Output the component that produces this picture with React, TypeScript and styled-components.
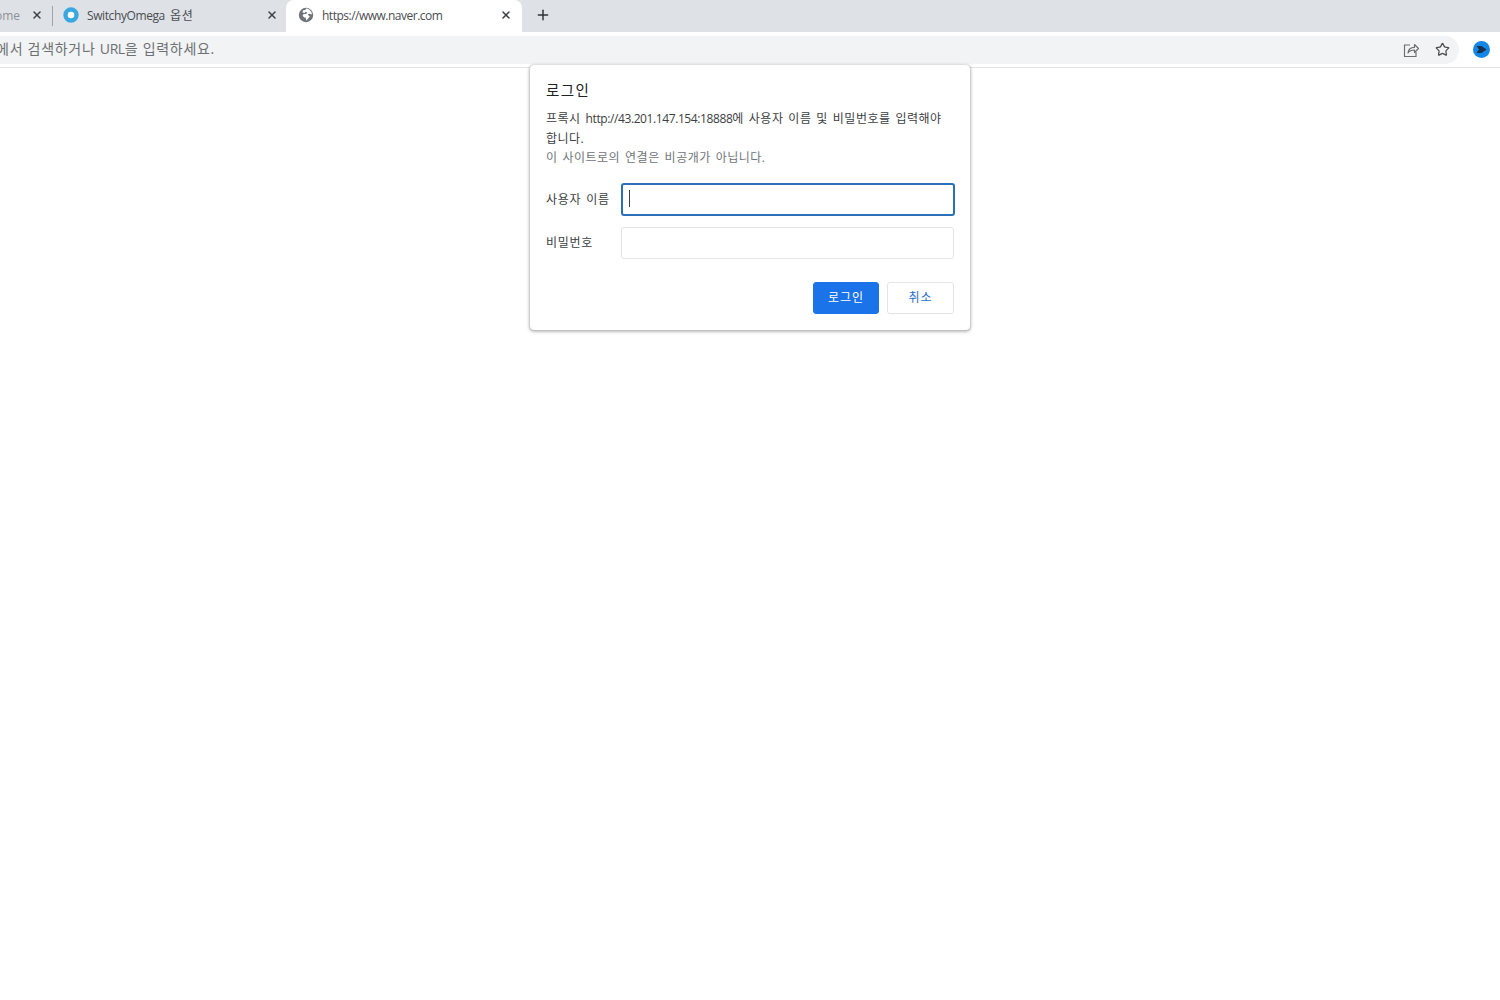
import React from "react";
import styled, { createGlobalStyle } from "styled-components";
import { Plus, Star, X } from "lucide-react";

const FONT = `"Open Sans", "Noto Sans CJK KR", sans-serif`;

const Global = createGlobalStyle`
  html, body { margin: 0; padding: 0; background: #fff; }
  body { font-family: ${FONT}; overflow: hidden; }
`;

const Page = styled.div`
  position: relative;
  width: 1500px;
  height: 1000px;
  overflow: hidden;
  background: #fff;
`;

const TabStrip = styled.div`
  display: flex;
  align-items: stretch;
  height: 32px;
  background: #dee1e6;
`;

const Tab = styled.div<{ $width: number; $active?: boolean }>`
  display: flex;
  align-items: center;
  flex: none;
  box-sizing: border-box;
  width: ${(p) => p.$width}px;
  height: 32px;
  padding-bottom: 2px;
  background: ${(p) => (p.$active ? "#fff" : "transparent")};
  border-radius: ${(p) => (p.$active ? "8px 8px 0 0" : "0")};
`;

const Divider = styled.div`
  flex: none;
  width: 1px;
  height: 20px;
  margin: 6px 0 0;
  background: #9fa3a8;
`;

const ClippedTabLabel = styled.div`
  flex: 1;
  display: flex;
  justify-content: flex-end;
  overflow: hidden;
  white-space: nowrap;
  font-size: 12px;
  color: #8f9296;
  margin-right: 11px;
`;

const Latin = styled.span<{ $tight?: boolean }>`
  letter-spacing: ${(p) => (p.$tight ? -0.5 : -0.4)}px;
`;

const TabTitle = styled.span<{ $width: number }>`
  flex: none;
  width: ${(p) => p.$width}px;
  overflow: hidden;
  white-space: nowrap;
  font-size: 12px;
  letter-spacing: 0.6px;
  word-spacing: 1.5px;
  color: #4a4d51;
`;

const Favicon = styled.svg<{ $inset?: number }>`
  flex: none;
  width: 16px;
  height: 16px;
  margin: 0 8px 0 ${(p) => p.$inset ?? 10}px;
`;

const CloseButton = styled(X)<{ $gap?: number }>`
  flex: none;
  width: 12px;
  height: 12px;
  margin-right: ${(p) => p.$gap ?? 0}px;
  color: #3c4043;
`;

const NewTab = styled(Plus)`
  flex: none;
  align-self: center;
  width: 16px;
  height: 16px;
  margin: 0 0 2px 13px;
  color: #303235;
`;

const Toolbar = styled.div`
  display: flex;
  align-items: center;
  box-sizing: border-box;
  height: 36px;
  background: #fff;
  border-bottom: 1px solid #e2e3e5;
`;

const Omnibox = styled.div`
  flex: none;
  display: flex;
  align-items: center;
  width: 1459px;
  height: 28px;
  background: #f1f3f4;
  border-radius: 0 14px 14px 0;
`;

const UrlHint = styled.div`
  flex: none;
  display: flex;
  justify-content: flex-end;
  width: 215px;
  margin-bottom: 4px;
  overflow: hidden;
  white-space: nowrap;
  font-size: 14px;
  letter-spacing: 0.7px;
  color: #6d7073;
`;

const OmniActions = styled.div`
  margin-left: auto;
  display: flex;
  align-items: center;
  gap: 16px;
  padding-right: 9px;
`;

const ToolIcon = styled.svg`
  flex: none;
  width: 16px;
  height: 16px;
  color: #6a6d71;
`;

const StarIcon = styled(Star)`
  flex: none;
  width: 15px;
  height: 15px;
  color: #4a4d51;
`;

const ExtensionIcon = styled.svg`
  flex: none;
  width: 17px;
  height: 17px;
  margin-left: 14px;
`;

const Dialog = styled.form`
  position: absolute;
  left: 530px;
  top: 65px;
  box-sizing: border-box;
  width: 440px;
  height: 265px;
  padding: 16px;
  background: #fff;
  border-radius: 4px;
  box-shadow: 0 1px 3px 1px rgba(60, 64, 67, 0.35), 0 0 1px rgba(60, 64, 67, 0.35);
`;

const DialogTitle = styled.h1`
  margin: 0 0 8px;
  font-size: 14.5px;
  font-weight: 400;
  line-height: 20px;
  letter-spacing: 1.4px;
  color: #202124;
`;

const Message = styled.p<{ $muted?: boolean }>`
  margin: 0;
  width: 405px;
  font-size: 12px;
  line-height: 19.5px;
  letter-spacing: 0.5px;
  word-spacing: 1.3px;
  word-break: keep-all;
  color: ${(p) => (p.$muted ? "#70757a" : "#3c4043")};
`;

const Fields = styled.div`
  display: grid;
  grid-template-columns: 75px 333px;
  row-gap: 11px;
  align-items: center;
  margin-top: 16px;
`;

const FieldLabel = styled.label`
  font-size: 12px;
  letter-spacing: 0.7px;
  word-spacing: 1.3px;
  color: #3c4043;
  white-space: nowrap;
  margin-top: -2px;
`;

const TextInput = styled.input<{ $focused?: boolean }>`
  display: block;
  box-sizing: border-box;
  width: ${(p) => (p.$focused ? 334 : 333)}px;
  height: ${(p) => (p.$focused ? 33 : 32)}px;
  margin-top: ${(p) => (p.$focused ? -1 : 0)}px;
  padding: 0 7px;
  background: #fff;
  outline: none;
  font: 12px ${FONT};
  border-radius: 3px;
  border: ${(p) => (p.$focused ? "2px solid #2a70b9" : "1px solid #e3e4e6")};
`;

const InputWrap = styled.div`
  position: relative;
  height: 32px;
`;

const Caret = styled.span`
  position: absolute;
  left: 8px;
  top: 6px;
  width: 1px;
  height: 17px;
  background: #3c4043;
`;

const Actions = styled.div`
  display: flex;
  justify-content: flex-end;
  gap: 8px;
  margin-top: 23px;
`;

const Button = styled.button<{ $primary?: boolean }>`
  box-sizing: border-box;
  width: ${(p) => (p.$primary ? 66 : 67)}px;
  height: 32px;
  padding: 0 0 2px;
  font: 12px ${FONT};
  letter-spacing: 0.9px;
  border-radius: 3px;
  border: 1px solid ${(p) => (p.$primary ? "#1a73e8" : "#e3e4e6")};
  background: ${(p) => (p.$primary ? "#1a73e8" : "#fff")};
  color: ${(p) => (p.$primary ? "#fff" : "#2a6fc9")};
`;

export default function App() {
  return (
    <Page>
      <Global />
      <TabStrip>
        <Tab $width={52}>
          <ClippedTabLabel>Chrome</ClippedTabLabel>
          <CloseButton strokeWidth={3} $gap={9} />
        </Tab>
        <Divider />
        <Tab $width={233}>
          <Favicon viewBox="0 0 16 16">
            <circle cx="8" cy="8" r="5.5" fill="#fff" stroke="#3aa8e0" strokeWidth="4.4" />
          </Favicon>
          <TabTitle $width={179}>
            <Latin>SwitchyOmega</Latin> 옵션
          </TabTitle>
          <CloseButton strokeWidth={3} />
        </Tab>
        <Tab $width={236} $active>
          <Favicon viewBox="0 0 16 16" $inset={12}>
            <circle cx="8" cy="8" r="7.2" fill="#6f7276" />
            <path
              d="M8.8 1.3 7 3 4.8 3.6 4.6 5.6 6.6 6 7.6 4.8 9.2 5.4 8.2 7H5.7L4.6 8.4 6 10.4H7.6L8.2 13.4 10 11.7 11.8 9.4 9.6 7.6 11.2 6.8 14 7.6 13.4 5 11.2 2.4Z"
              fill="#fff"
            />
          </Favicon>
          <TabTitle $width={178}>
            <Latin $tight>https://www.naver.com</Latin>
          </TabTitle>
          <CloseButton strokeWidth={3} />
        </Tab>
        <NewTab strokeWidth={2.2} />
      </TabStrip>
      <Toolbar>
        <Omnibox>
          <UrlHint>
            <span>
              Google에서 검색하거나 <Latin>URL</Latin>을 입력하세요.
            </span>
          </UrlHint>
          <OmniActions>
            <ToolIcon viewBox="0 0 16 16" fill="none" stroke="currentColor" strokeWidth="1.15">
              <path d="M7 3H1.5v11.5h11.5V10" />
              <path d="M5 11c.3-3.6 3-5.7 6.5-5.7V2.5l4 4-4 4V8C9 8 6.5 8.7 5 11Z" strokeLinejoin="round" />
            </ToolIcon>
            <StarIcon strokeWidth={2} />
          </OmniActions>
        </Omnibox>
        <ExtensionIcon viewBox="0 0 17 17">
          <circle cx="8.5" cy="8.5" r="8.5" fill="#1487e6" />
          <path d="M3.5 5h5l5 3.5-5 3.5h-5l2.5-3.5Z" fill="#17314f" />
        </ExtensionIcon>
      </Toolbar>
      <Dialog onSubmit={(e) => e.preventDefault()}>
        <DialogTitle>로그인</DialogTitle>
        <Message>
          프록시 <Latin>http://43.201.147.154:18888</Latin>에 사용자 이름 및 비밀번호를 입력해야 합니다.
        </Message>
        <Message $muted>이 사이트로의 연결은 비공개가 아닙니다.</Message>
        <Fields>
          <FieldLabel>사용자 이름</FieldLabel>
          <InputWrap>
            <TextInput $focused readOnly />
            <Caret />
          </InputWrap>
          <FieldLabel>비밀번호</FieldLabel>
          <InputWrap>
            <TextInput type="password" readOnly />
          </InputWrap>
        </Fields>
        <Actions>
          <Button $primary>로그인</Button>
          <Button type="button">취소</Button>
        </Actions>
      </Dialog>
    </Page>
  );
}
